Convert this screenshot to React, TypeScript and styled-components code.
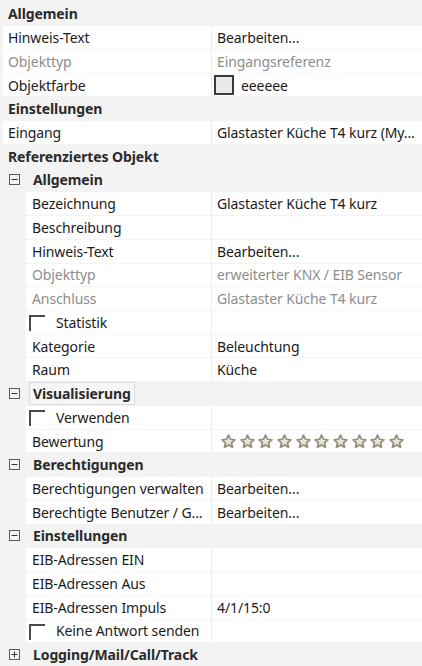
import React from 'react';
import styled, { createGlobalStyle } from 'styled-components';

type RowData =
  | { kind: 'category'; label: string }
  | { kind: 'group'; label: string; open: boolean; focused?: boolean }
  | { kind: 'prop'; level: 0 | 1; name: string; value?: string; disabled?: boolean; swatch?: boolean }
  | { kind: 'check'; name: string }
  | { kind: 'rating'; name: string; stars: number };

const rows: RowData[] = [
  { kind: 'category', label: 'Allgemein' },
  { kind: 'prop', level: 0, name: 'Hinweis-Text', value: 'Bearbeiten...' },
  { kind: 'prop', level: 0, name: 'Objekttyp', value: 'Eingangsreferenz', disabled: true },
  { kind: 'prop', level: 0, name: 'Objektfarbe', value: 'eeeeee', swatch: true },
  { kind: 'category', label: 'Einstellungen' },
  { kind: 'prop', level: 0, name: 'Eingang', value: 'Glastaster Küche T4 kurz (My...' },
  { kind: 'category', label: 'Referenziertes Objekt' },
  { kind: 'group', label: 'Allgemein', open: true },
  { kind: 'prop', level: 1, name: 'Bezeichnung', value: 'Glastaster Küche T4 kurz' },
  { kind: 'prop', level: 1, name: 'Beschreibung' },
  { kind: 'prop', level: 1, name: 'Hinweis-Text', value: 'Bearbeiten...' },
  { kind: 'prop', level: 1, name: 'Objekttyp', value: 'erweiterter KNX / EIB Sensor', disabled: true },
  { kind: 'prop', level: 1, name: 'Anschluss', value: 'Glastaster Küche T4 kurz', disabled: true },
  { kind: 'check', name: 'Statistik' },
  { kind: 'prop', level: 1, name: 'Kategorie', value: 'Beleuchtung' },
  { kind: 'prop', level: 1, name: 'Raum', value: 'Küche' },
  { kind: 'group', label: 'Visualisierung', open: true, focused: true },
  { kind: 'check', name: 'Verwenden' },
  { kind: 'rating', name: 'Bewertung', stars: 10 },
  { kind: 'group', label: 'Berechtigungen', open: true },
  { kind: 'prop', level: 1, name: 'Berechtigungen verwalten', value: 'Bearbeiten...' },
  { kind: 'prop', level: 1, name: 'Berechtigte Benutzer / G...', value: 'Bearbeiten...' },
  { kind: 'group', label: 'Einstellungen', open: true },
  { kind: 'prop', level: 1, name: 'EIB-Adressen EIN' },
  { kind: 'prop', level: 1, name: 'EIB-Adressen Aus' },
  { kind: 'prop', level: 1, name: 'EIB-Adressen Impuls', value: '4/1/15:0' },
  { kind: 'check', name: 'Keine Antwort senden' },
  { kind: 'group', label: 'Logging/Mail/Call/Track', open: false },
];

const SPLIT = 212;
const ROW_H = 22.74;

const GlobalStyle = createGlobalStyle`
  html, body {
    margin: 0;
    padding: 0;
    background: #f3f3f3;
    overflow: hidden;
  }
  body {
    font-family: "Noto Sans", "Open Sans", sans-serif;
    font-size: 14px;
    letter-spacing: -0.1px;
    color: #1b1b1b;
  }
`;

const Grid = styled.div`
  width: 422px;
  height: 666px;
  display: flex;
  flex-direction: column;
  gap: 1px;
  background: #f3f3f3;
  overflow: hidden;
`;

const TopStrip = styled.div`
  height: 3px;
  margin-left: 3px;
  background: #f8f8f8;
  display: grid;
  grid-template-columns: ${SPLIT - 3}px 1fr;
  & > div:first-child {
    border-right: 1px solid #ececec;
  }
`;

const HeaderRow = styled.div<{ $indent: number }>`
  height: ${ROW_H}px;
  flex-shrink: 0;
  display: flex;
  align-items: center;
  padding-left: ${(p) => p.$indent}px;
  font-weight: 700;
  color: #2b2b2b;
  white-space: nowrap;
`;

const Expander = styled.svg`
  width: 11px;
  height: 11px;
  margin-left: 9px;
  margin-right: 12px;
  flex-shrink: 0;
`;

const GroupLabel = styled.span<{ $focused?: boolean }>`
  display: flex;
  align-items: center;
  height: 100%;
  box-sizing: border-box;
  padding: 0 3px;
  margin-left: -3px;
  border: 1px solid ${(p) => (p.$focused ? '#dadada' : 'transparent')};
  background: ${(p) => (p.$focused ? '#f6f6f6' : 'transparent')};
`;

const PropRow = styled.div<{ $indent: number }>`
  height: ${ROW_H}px;
  flex-shrink: 0;
  margin-left: ${(p) => p.$indent}px;
  background: #ffffff;
  display: grid;
  grid-template-columns: ${(p) => SPLIT - p.$indent}px 1fr;
  white-space: nowrap;
`;

const NameCell = styled.div<{ $disabled?: boolean; $pad: number }>`
  display: flex;
  align-items: center;
  padding-left: ${(p) => p.$pad}px;
  border-right: 1px solid #ededed;
  overflow: hidden;
  color: ${(p) => (p.$disabled ? '#8d8d8d' : '#1b1b1b')};
`;

const ValueCell = styled.div<{ $disabled?: boolean }>`
  display: flex;
  align-items: center;
  padding-left: 5px;
  overflow: hidden;
  color: ${(p) => (p.$disabled ? '#8d8d8d' : '#1b1b1b')};
`;

const Swatch = styled.span`
  width: 20px;
  height: 20px;
  box-sizing: border-box;
  margin-left: -3px;
  margin-right: 7px;
  border: 2px solid #3a3a3a;
  background: #e9e9e9;
  flex-shrink: 0;
`;

const CheckCorner = styled.span`
  width: 16px;
  height: 16px;
  box-sizing: border-box;
  border-top: 2px solid #4a4a4a;
  border-left: 2px solid #4a4a4a;
  margin-left: -3px;
  margin-right: 11px;
  margin-top: 2px;
  flex-shrink: 0;
`;

const Stars = styled.div`
  display: flex;
  gap: 3.67px;
  padding-left: 4px;
`;

const StarIcon = styled.svg`
  width: 15px;
  height: 15px;
  display: block;
`;

const Star: React.FC = () => (
  <StarIcon viewBox="0 0 24 24">
    <defs>
      <linearGradient id="sg" x1="0" y1="0" x2="0" y2="1">
        <stop offset="0" stopColor="#f4f2ec" />
        <stop offset="1" stopColor="#dcd7ca" />
      </linearGradient>
    </defs>
    <path
      d="M12 1.8l3.1 6.6 7.1.8-5.3 4.9 1.5 7.1L12 17.6l-6.4 3.6 1.5-7.1L1.8 9.2l7.1-.8z"
      fill="url(#sg)"
      stroke="#958e7c"
      strokeWidth="2.8"
      strokeLinejoin="round"
    />
  </StarIcon>
);

const ExpandIcon: React.FC<{ open: boolean }> = ({ open }) => (
  <Expander viewBox="0 0 11 11">
    <rect x="0.5" y="0.5" width="10" height="10" fill="none" stroke="#5a5a5a" />
    <line x1="2.5" y1="5.5" x2="8.5" y2="5.5" stroke="#333" />
    {!open && <line x1="5.5" y1="2.5" x2="5.5" y2="8.5" stroke="#333" />}
  </Expander>
);

const Row: React.FC<{ row: RowData }> = ({ row }) => {
  switch (row.kind) {
    case 'category':
      return <HeaderRow $indent={8}>{row.label}</HeaderRow>;
    case 'group':
      return (
        <HeaderRow $indent={0}>
          <ExpandIcon open={row.open} />
          <GroupLabel $focused={row.focused}>{row.label}</GroupLabel>
        </HeaderRow>
      );
    case 'prop': {
      const indent = row.level === 0 ? 3 : 26;
      return (
        <PropRow $indent={indent}>
          <NameCell $pad={row.level === 0 ? 5 : 6} $disabled={row.disabled}>
            {row.name}
          </NameCell>
          <ValueCell $disabled={row.disabled}>
            {row.swatch && <Swatch />}
            {row.value}
          </ValueCell>
        </PropRow>
      );
    }
    case 'check':
      return (
        <PropRow $indent={26}>
          <NameCell $pad={6}>
            <CheckCorner />
            {row.name}
          </NameCell>
          <ValueCell />
        </PropRow>
      );
    case 'rating':
      return (
        <PropRow $indent={26}>
          <NameCell $pad={6}>{row.name}</NameCell>
          <ValueCell>
            <Stars>
              {Array.from({ length: row.stars }).map((_, i) => (
                <Star key={i} />
              ))}
            </Stars>
          </ValueCell>
        </PropRow>
      );
  }
};

const App: React.FC = () => {
  return (
    <>
      <GlobalStyle />
      <Grid>
        <TopStrip>
          <div />
          <div />
        </TopStrip>
        {rows.map((r, i) => (
          <Row key={i} row={r} />
        ))}
      </Grid>
    </>
  );
};

export default App;
